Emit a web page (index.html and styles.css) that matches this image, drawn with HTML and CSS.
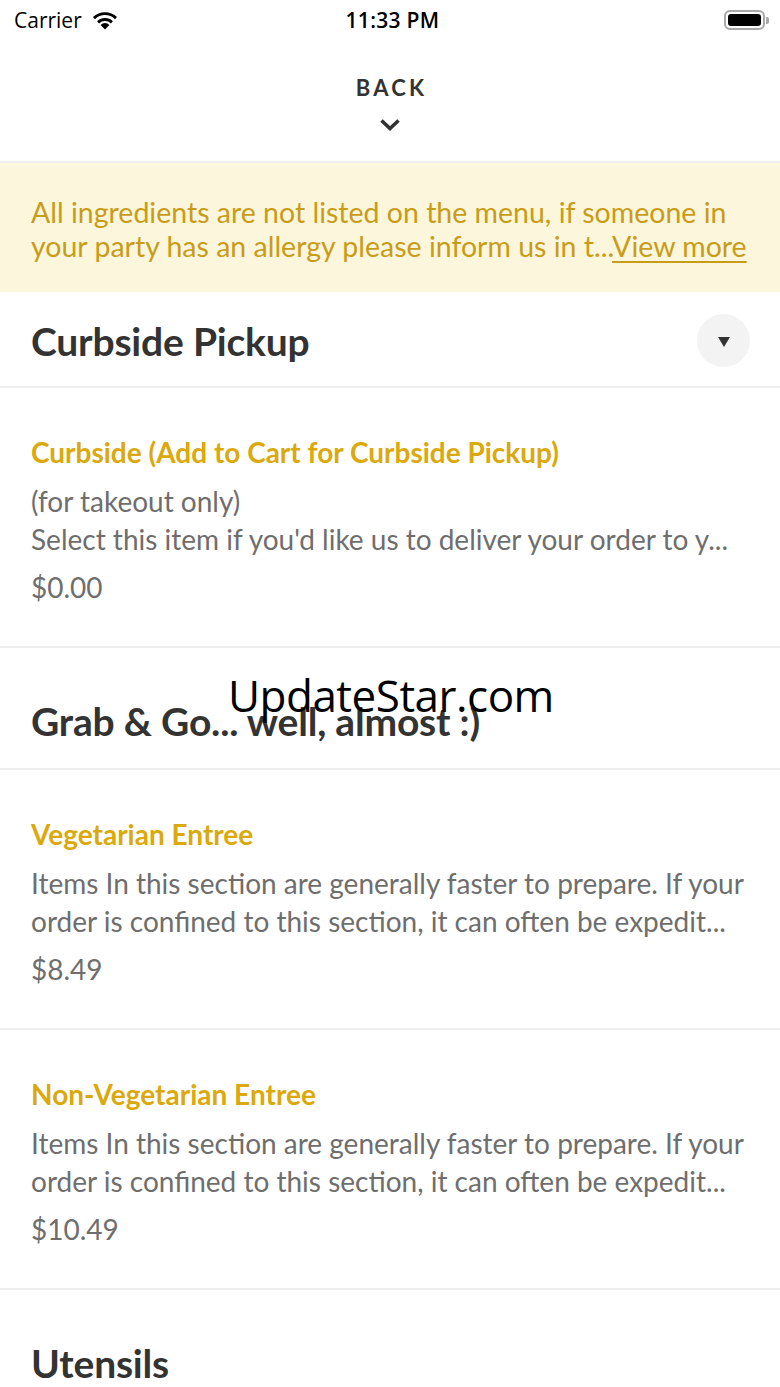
FILE: index.html
```html
<!DOCTYPE html>
<html lang="en">
<head>
<meta charset="utf-8">
<title>Menu</title>
<link rel="stylesheet" href="styles.css">
</head>
<body>
<div class="screen">
  <div class="status">
    <div class="status-left">
      <span class="carrier">Carrier</span>
      <svg class="wifi" width="28" height="20" viewBox="0 0 28 20">
        <path d="M14 19.5 L9.6 14.9 A6.2 6.2 0 0 1 18.4 14.9 Z" fill="#000"/>
        <path d="M6.1 11.3 A11.2 11.2 0 0 1 21.9 11.3 L19.9 13.4 A8.3 8.3 0 0 0 8.1 13.4 Z" fill="#000"/>
        <path d="M2 7.1 A17 17 0 0 1 26 7.1 L24 9.2 A14.1 14.1 0 0 0 4 9.2 Z" fill="#000"/>
      </svg>
    </div>
    <div class="time">11:33 PM</div>
    <div class="status-right">
      <div class="battery"><div class="battery-fill"></div></div>
      <div class="battery-nub"></div>
    </div>
  </div>

  <div class="nav">
    <div class="back">BACK</div>
    <svg class="chev" width="22" height="14" viewBox="0 0 22 14">
      <path d="M2.5 2.5 L11 10.5 L19.5 2.5" fill="none" stroke="#333" stroke-width="3.6"/>
    </svg>
  </div>

  <div class="banner">
    All ingredients are not listed on the menu, if someone in your party has an allergy please inform us in t...<a class="more">View more</a>
  </div>

  <div class="section-head first">
    <h2>Curbside Pickup</h2>
    <div class="toggle"><span class="tri"></span></div>
  </div>

  <div class="item">
    <div class="item-title">Curbside (Add to Cart for Curbside Pickup)</div>
    <div class="item-desc">(for takeout only)<br>Select this item if you'd like us to deliver your order to y...</div>
    <div class="item-price">$0.00</div>
  </div>

  <div class="section-head">
    <h2>Grab &amp; Go... well, almost :)</h2>
  </div>

  <div class="item">
    <div class="item-title">Vegetarian Entree</div>
    <div class="item-desc">Items In this section are generally faster to prepare. If your order is confined to this section, it can often be expedit...</div>
    <div class="item-price">$8.49</div>
  </div>

  <div class="item">
    <div class="item-title">Non-Vegetarian Entree</div>
    <div class="item-desc">Items In this section are generally faster to prepare. If your order is confined to this section, it can often be expedit...</div>
    <div class="item-price">$10.49</div>
  </div>

  <div class="section-head last">
    <h2>Utensils</h2>
  </div>

  <div class="watermark">UpdateStar.com</div>
</div>
</body>
</html>
```

FILE: styles.css
```css
* { box-sizing: border-box; }
html, body { margin: 0; padding: 0; background: #fff; }
body { font-family: Lato, "Open Sans", sans-serif; }

.screen {
  position: relative;
  width: 780px;
  height: 1387px;
  overflow: hidden;
  background: #fff;
}

.status {
  height: 40px;
  display: flex;
  align-items: center;
  justify-content: space-between;
  padding: 0 11px 0 14px;
  font-family: "Open Sans", "Liberation Sans", sans-serif;
  color: #000;
}
.status-left { display: flex; align-items: center; gap: 9px; width: 200px; }
.carrier { font-size: 21px; letter-spacing: 0px; }
.wifi { margin-top: -1px; }
.time { font-size: 21px; font-weight: 600; letter-spacing: 0.3px; padding-left: 2px; }
.status-right { display: flex; align-items: center; justify-content: flex-end; width: 200px; gap: 1px; }
.battery {
  width: 41px; height: 20px;
  border: 2px solid #a8a8a8;
  border-radius: 6px;
  padding: 2px;
}
.battery-fill { width: 100%; height: 100%; background: #000; border-radius: 3px; }
.battery-nub { width: 3px; height: 7px; background: #a8a8a8; border-radius: 0 2px 2px 0; }

.nav {
  height: 123px;
  display: flex;
  flex-direction: column;
  align-items: center;
  padding-top: 34px;
  border-bottom: 2px solid #ededed;
}
.back {
  font-size: 22px;
  font-weight: 700;
  letter-spacing: 3.2px;
  color: #333;
  line-height: 28px;
  padding-left: 3px;
}
.chev { margin-top: 16px; }

.banner {
  background: #fbf6dc;
  color: #c99c17;
  font-size: 28.5px;
  line-height: 34px;
  padding: 32px 20px 28px 31px;
  height: 129px;
  letter-spacing: 0px;
}
.banner .more {
  white-space: nowrap;
  text-decoration: underline;
  text-underline-offset: 4px;
  text-decoration-thickness: 2px;
}

.section-head {
  display: flex;
  align-items: center;
  justify-content: space-between;
  padding: 48px 30px 22px 31px;
  border-bottom: 2px solid #efefef;
}
.section-head.first { padding-top: 22px; padding-bottom: 19px; }
.section-head.last { border-bottom: none; }
.section-head h2 {
  margin: 0;
  font-size: 39px;
  font-weight: 700;
  color: #333;
  line-height: 50px;
  letter-spacing: -0.2px;
}
.toggle {
  width: 53px; height: 53px;
  border-radius: 50%;
  background: #f3f3f3;
  display: flex; align-items: center; justify-content: center;
}
.tri {
  width: 0; height: 0;
  border-left: 6px solid transparent;
  border-right: 6px solid transparent;
  border-top: 10px solid #333;
  margin-top: 2px;
}

.item {
  padding: 45px 31px 40px 31px;
  border-bottom: 2px solid #efefef;
  font-size: 28px;
  line-height: 38px;
}
.item-title { color: #dba90d; font-weight: 700; }
.item-desc {
  color: #6e6e6e;
  margin-top: 11px;
  display: -webkit-box;
  -webkit-line-clamp: 2;
  -webkit-box-orient: vertical;
  overflow: hidden;
}
.item-price { color: #6e6e6e; margin-top: 10px; }

.watermark {
  position: absolute;
  left: 228px;
  top: 667px;
  font-family: "Open Sans", "Noto Sans", sans-serif;
  font-size: 44px;
  line-height: 56px;
  color: #000;
  letter-spacing: -0.5px;
}
```
